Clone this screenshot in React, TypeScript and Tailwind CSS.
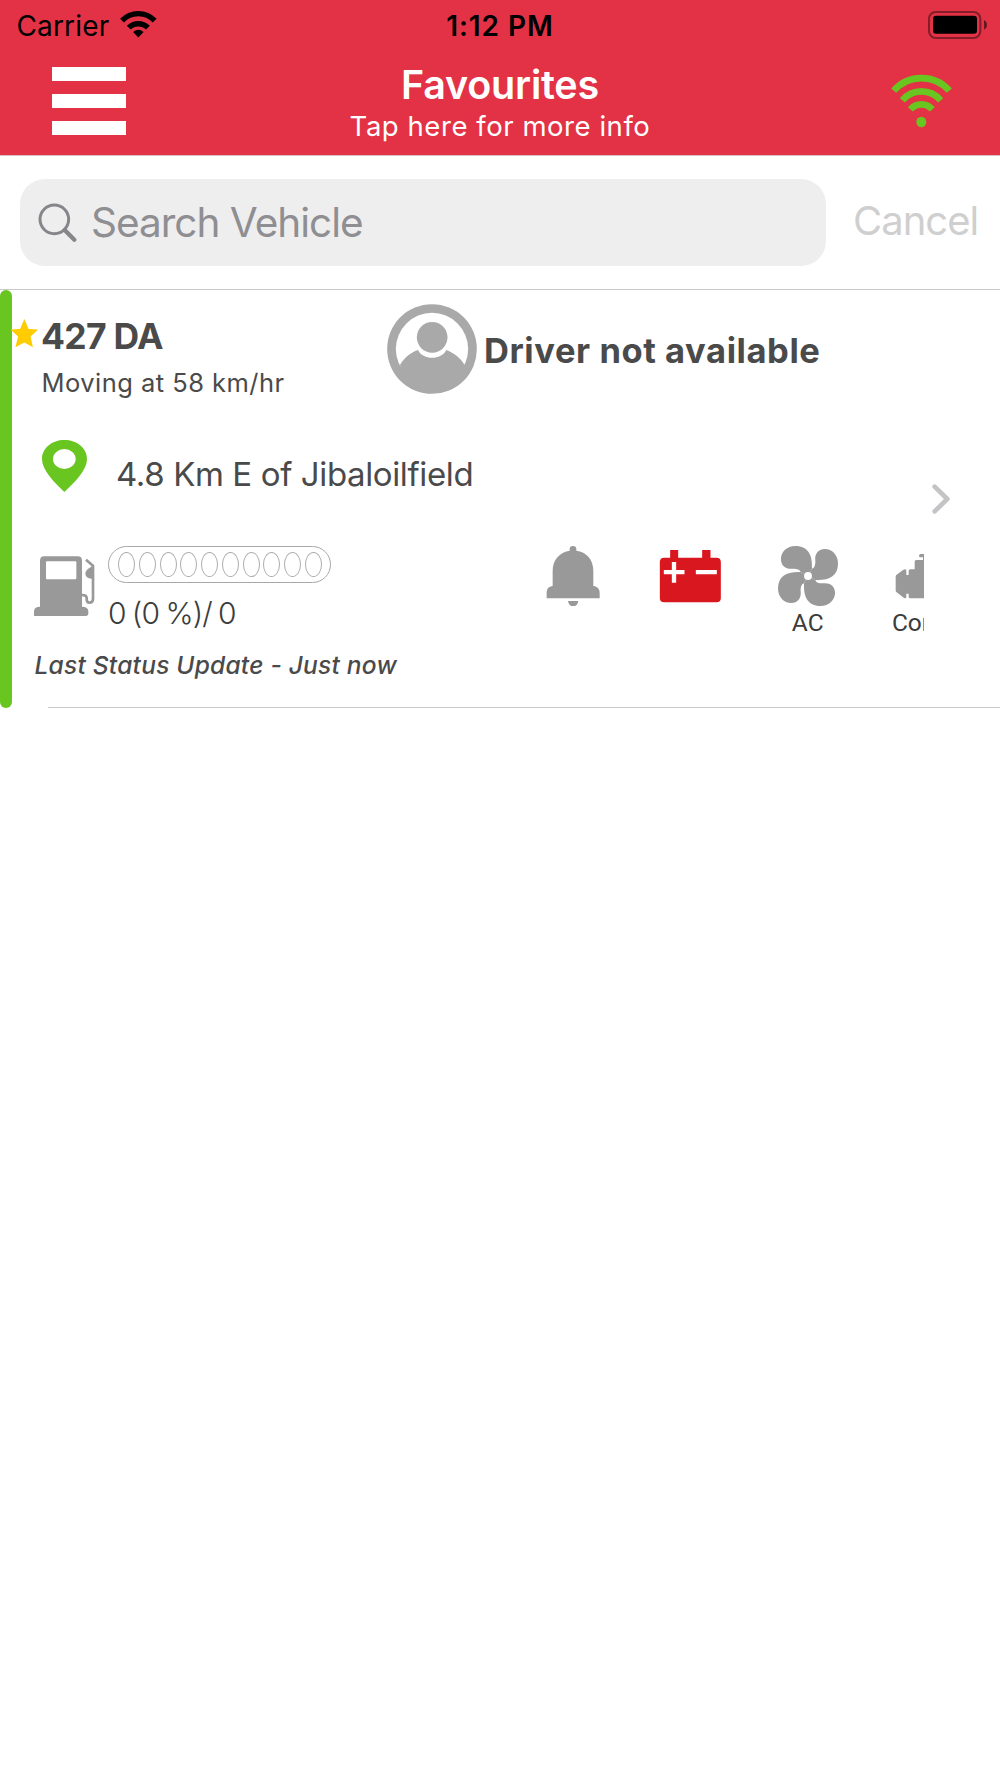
const FAN_BLADE =
  "M12 -22 C14 -63 1 -91 -38 -91 C-64 -91 -82 -73 -82 -51 C-82 -30 -66 -21 -50 -22 C-36 -23 -26 -22 -22 -12 L0 0 Z";

function StatusBar() {
  return (
    <div className="grid h-[50px] grid-cols-3 pt-px text-black">
      <div className="flex items-center pl-[16.500px]">
        <span className="whitespace-nowrap text-[28px] tracking-[0.150px]">Carrier</span>
        <svg className="ml-[11px] h-7 w-[37px] shrink-0 -translate-y-[2px]" viewBox="361 30 110 82" fill="none" stroke="black" strokeWidth="16">
          <path d="M367 61 A67 67 0 0 1 464 61" />
          <path d="M387 82 A40 40 0 0 1 444 82" />
          <path d="M400 95 Q415.500 81 431 95 L415.500 111 Z" fill="black" stroke="none" />
        </svg>
      </div>
      <div className="flex items-center justify-center">
        <span className="whitespace-nowrap text-[28px] font-semibold tracking-[0.950px]">1:12 PM</span>
      </div>
      <div className="flex items-start justify-end pr-[12px] pt-[9.800px]">
        <svg className="h-[28px] w-[60px]" viewBox="804 31 180 84">
          <rect x="807" y="34" width="154" height="78" rx="20" fill="none" stroke="black" strokeOpacity="0.42" strokeWidth="6" />
          <rect x="819" y="45" width="132" height="54" rx="9" />
          <path d="M972 58 Q981 63 981 72.500 Q981 82 972 87 Z" fillOpacity="0.55" />
        </svg>
      </div>
    </div>
  );
}

function Header() {
  return (
    <header className="h-[156px] border-b border-[#d8c4c6] bg-[#e33245]">
      <StatusBar />
      <div className="grid grid-cols-3">
        <button aria-label="Menu" className="ml-[51.700px] mt-[17px] flex h-[68px] w-[74.300px] flex-col justify-between">
          <span className="h-[14.300px] w-full bg-white" />
          <span className="h-[14.300px] w-full bg-white" />
          <span className="h-[14.300px] w-full bg-white" />
        </button>
        <div className="flex flex-col items-center text-white">
          <h1 className="mt-[11px] whitespace-nowrap text-[39.500px] font-semibold leading-[48px] tracking-[-0.220px]">Favourites</h1>
          <p className="whitespace-nowrap text-[27.500px] leading-[34px] tracking-[0.550px]">Tap here for more info</p>
        </div>
        <div className="flex justify-end pr-[48px] pt-[24px]">
          <svg className="h-[54px] w-[61px]" viewBox="693 222 183 162" fill="none" stroke="#69c520" strokeWidth="20">
            <path d="M701 272 A111 111 0 0 1 868 272" />
            <path d="M727 301 A75 75 0 0 1 842 301" />
            <path d="M751 328 A44 44 0 0 1 817 328" />
            <ellipse cx="784" cy="366" rx="15" ry="16" fill="#69c520" stroke="none" />
          </svg>
        </div>
      </div>
    </header>
  );
}

function SearchBar() {
  return (
    <div className="flex h-[134px] items-start border-b border-[#c9c9cb] pl-[19.500px] pt-[23px]">
      <div className="flex h-[87px] w-[806.500px] items-center rounded-[25px] bg-[#eeeeee]">
        <svg className="ml-[18.500px] h-[40px] w-[40px]" viewBox="114 125 120 120" fill="none" stroke="#86868a" strokeLinecap="round">
          <circle cx="163" cy="174" r="43" strokeWidth="9" />
          <path d="M194 206 L223 235" strokeWidth="13" />
        </svg>
        <span className="ml-[13px] mt-px whitespace-nowrap text-[40.500px] leading-[48px] tracking-[-1px] text-[#8e8e93]">Search Vehicle</span>
      </div>
      <span className="ml-[27px] mt-[18px] whitespace-nowrap text-[40px] leading-[48px] tracking-[-1px] text-[#cfcfcf]">Cancel</span>
    </div>
  );
}

function FuelGauge() {
  return (
    <div className="flex">
      <svg className="ml-[22px] mt-[10px] h-[60px] w-[61px]" viewBox="102 168 183 180" fill="#999999">
        <path d="M102 348 V334 Q102 320 120 320 V182 Q120 169 133 169 H233 Q246 169 246 182 V320 Q265 320 265 334 V340 Q265 348 257 348 Z" />
        <rect x="138" y="184" width="91" height="54" rx="3" fill="white" />
        <path d="M258 179 L279 197 V297 Q279 308 268 308 Q260 308 260 298 V294 Q260 285 246 285" fill="none" stroke="#999999" strokeWidth="8" strokeLinejoin="round" />
        <path d="M279 197 Q256 208 256 221 Q257 236 279 236 Z" />
      </svg>
      <div className="ml-[12.500px]">
        <div className="flex h-[37px] w-[223px] items-center justify-center gap-[3.700px] rounded-full border border-[#a8a8a8] pl-[8px] pr-[6px]">
          {Array.from({ length: 10 }, (_, i) => (
            <span key={i} className="h-[25px] w-[17px] shrink-0 rounded-[50%] border border-[#adadad]" />
          ))}
        </div>
        <div className="mt-[9.500px] pl-[0.500px] leading-[40px]">
          <span className="whitespace-nowrap text-[30px] font-light tracking-[-0.800px] text-[#3c3c3c] [word-spacing:-1.500px]">0 (0 %)/ 0</span>
        </div>
      </div>
    </div>
  );
}

function StatusIcons() {
  return (
    <div className="ml-auto flex w-[410px] overflow-hidden font-[Roboto,sans-serif] text-[24.500px] leading-[28px] text-[#3c3c3c]">
      <div className="flex w-[117.500px] shrink-0 flex-col items-center">
        <svg className="h-[60px] w-[60px]" viewBox="38 78 180 180" fill="#999999">
          <path d="M67 198 V152 C67 118 90 96 118 92 V88 A10 10 0 0 1 138 88 V92 C168 96 189 118 189 152 V198 C202 199 208 208 208 218 V235 H49 V218 C49 207 55 199 67 198 Z" />
          <path d="M113 243 H144 Q141 259 128.500 259 Q116 259 113 243 Z" />
        </svg>
      </div>
      <div className="flex w-[117.500px] shrink-0 flex-col items-center">
        <svg className="h-[60px] w-[62px]" viewBox="387.500 78 186 180" fill="#d8171f">
          <path d="M421 90 H445 V113 H517 V90 H542 V113 H560 Q573 113 573 126 V234 Q573 247 560 247 H403 Q390 247 390 234 V126 Q390 113 403 113 H421 Z" />
          <path d="M402 156.500 H464 M432.500 126 V188 M498 156.500 H561" stroke="white" strokeWidth="13" />
        </svg>
      </div>
      <div className="flex w-[117.500px] shrink-0 flex-col items-center">
        <svg className="h-[60px] w-[60px]" viewBox="-91 -91 182 182" fill="#999999">
          <path d={FAN_BLADE} />
          <path d={FAN_BLADE} transform="rotate(90)" />
          <path d={FAN_BLADE} transform="rotate(180)" />
          <path d={FAN_BLADE} transform="rotate(270)" />
          <circle r="12" fill="white" />
        </svg>
        <span className="mt-[3px]">AC</span>
      </div>
      <div className="flex w-[117.500px] shrink-0 flex-col items-center">
        <svg className="h-[60px] w-[60px]" viewBox="436 258 180 180" fill="#999999">
          <path d="M438 350 Q438 346 441 344 L460 330 Q470 324 470 333 V345 H477 V333 Q477 328 482 328 H495 V305 Q495 300 500 300 H520 V292 H513 Q508 292 508 287 Q508 282 513 282 H560 V415 H482 Q477 415 477 410 V401 H470 V410 Q470 418 460 412 L441 397 Q438 395 438 391 Z" />
        </svg>
        <span className="mr-[1.500px] mt-[3px]">Comp</span>
      </div>
    </div>
  );
}

function VehicleRow() {
  return (
    <section className="relative flex h-[418px] text-[#4a4a4a]">
      <div className="w-[12px] shrink-0 rounded-full bg-[#69c520]" />
      <svg className="absolute left-[10px] top-[29px] h-[29px] w-[29px]" viewBox="31 117 85 88" fill="#ffcc00">
        <path d="M73 117 L86 147 L115 149 L92 170 L99 203 L73 188 L46 203 L54 170 L31 149 L60 147 Z" />
      </svg>
      <div className="w-[912px] shrink-0">
        <div className="flex h-[150px]">
          <div className="w-[344px] pl-[29px] pt-[22px]">
            <h2 className="whitespace-nowrap text-[35.500px] font-bold leading-[50px] tracking-[-0.700px]">427 DA</h2>
            <p className="mt-[6px] whitespace-nowrap pl-[0.500px] text-[25.500px] leading-[30px] tracking-[0.470px]">Moving at 58 km/hr</p>
          </div>
          <div className="mt-[14px] flex h-[90px] pl-[30.500px]">
            <svg className="h-[90px] w-[90px]" viewBox="48 42 270 270" fill="#a9a9a9">
              <circle cx="183" cy="177" r="134.500" />
              <circle cx="183" cy="177" r="108.500" fill="white" />
              <path d="M87 225 C100 203 118 188 141 180 C155 211 211 211 226 180 C250 190 268 203 281 225 A100 100 0 0 1 87 225 Z" />
              <circle cx="183.500" cy="142" r="46" />
            </svg>
            <span className="ml-[7.500px] mt-[2px] whitespace-nowrap text-[34.500px] font-bold leading-[90px] tracking-[0.570px]">Driver not available</span>
          </div>
        </div>
        <div className="flex h-[106px] pl-[29.500px]">
          <svg className="h-[52px] w-[45px]" viewBox="125 480 135 156" fill="#69c520">
            <path fillRule="evenodd" d="M192 480 C230 480 260 504 260 537 C260 570 225 605 192 636 C160 605 125 570 125 537 C125 504 155 480 192 480 Z M158 537 A34 30 0 0 0 226 537 A34 30 0 0 0 158 537 Z" />
          </svg>
          <p className="ml-[29.500px] mt-[9px] whitespace-nowrap text-[33px] leading-[50px] tracking-[-0.380px]">4.8 Km E of Jibaloilfield</p>
        </div>
        <div className="flex">
          <FuelGauge />
          <StatusIcons />
        </div>
        <p className="mt-[2px] whitespace-nowrap pl-[22.500px] text-[24.500px] font-medium italic leading-[50px] tracking-[0.230px]">Last Status Update - Just now</p>
      </div>
      <svg className="ml-[7.500px] h-[30px] w-[18px] self-center" viewBox="545 71 54 90" fill="none" stroke="#c4c4c7" strokeWidth="14" strokeLinecap="round" strokeLinejoin="round">
        <path d="M553 79 L591 116 L553 153" />
      </svg>
      <div className="absolute bottom-0 left-[48px] right-0 h-px bg-[#cacacc]" />
    </section>
  );
}

export default function App() {
  return (
    <main className="h-[1778px] w-[1000px] overflow-hidden bg-white font-[Inter,sans-serif]">
      <Header />
      <SearchBar />
      <VehicleRow />
    </main>
  );
}
